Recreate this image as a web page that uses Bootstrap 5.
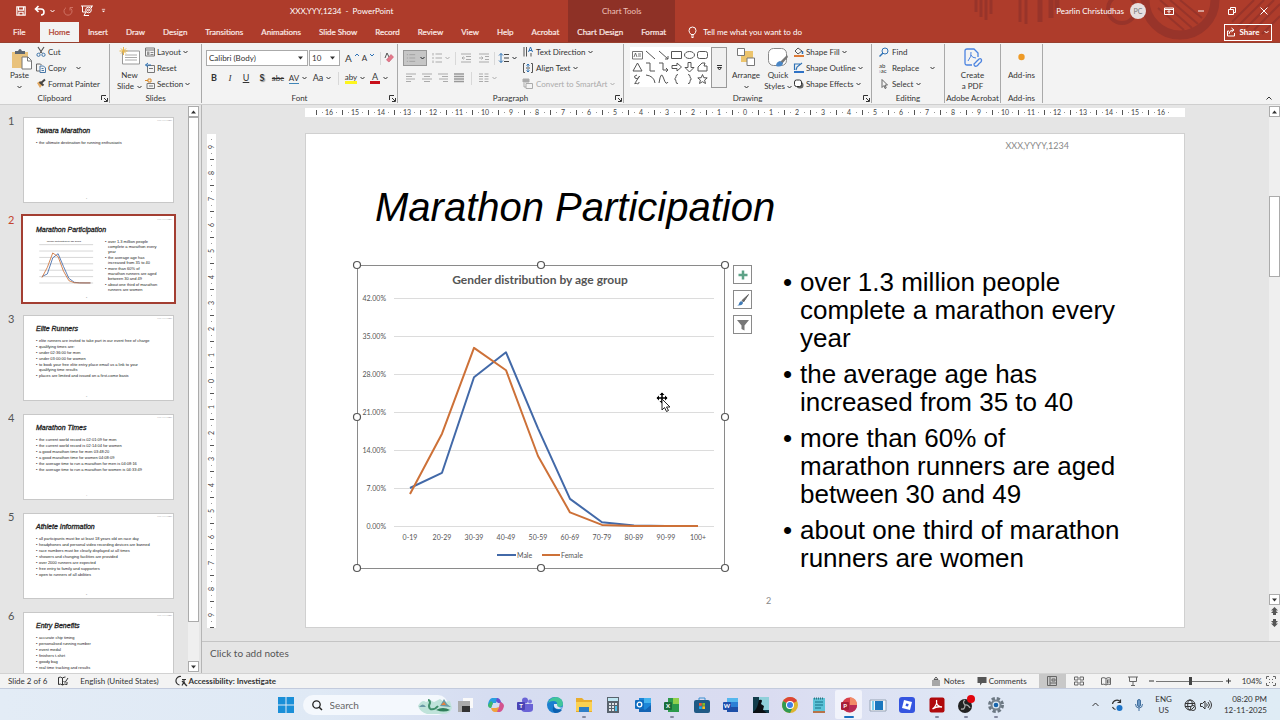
<!DOCTYPE html>
<html lang="en">
<head>
<meta charset="utf-8">
<meta name="viewport" content="width=device-width, initial-scale=1">
<title>XXX,YYY,1234 - PowerPoint</title>
<link href="https://cdn.jsdelivr.net/npm/bootstrap@5.3.0/dist/css/bootstrap.min.css" rel="stylesheet">
<style>
:root{--ui:Lato,"Open Sans",sans-serif;--brand:#ae3c2b;--ctx:#8e3126;--ink:#333}
body{font:8px/10px var(--ui);color:var(--ink);background:#e5e5e5;height:100vh;overflow:hidden}
button,input{font:inherit;color:inherit}
button{background:none;border:0;padding:0;line-height:inherit;white-space:nowrap}
svg{display:block;flex:none;fill:none;stroke:currentColor;overflow:visible}
.i5{width:5px;height:4px}.i12{width:12px;height:12px}.i10{width:10px;height:10px}.i16{width:16px;height:16px}
/* title bar and tabs */
.app-head{background:var(--brand);color:#fff;min-height:43px;border-bottom:1px solid #98402f;flex:none}
.head-main{flex:0 0 568px}
.title-row{height:22px}
.doc-name{padding-left:290px}
.quick{position:absolute;left:0;top:0;height:22px}
.tab-row{height:20px}
.rtab{height:20px;padding:0 9px;color:#fbe9e6;text-decoration:none;display:flex;align-items:center;white-space:nowrap;-webkit-text-stroke:.2px}
.rtab.first{padding:0 14px 0 13px}
.rtab.on{background:#f3f3f3;color:#b0402f}
.ctx{flex:0 0 106px;background:var(--ctx)}
.ctx-t{height:22px;color:#f0c3bc}
.deco{position:absolute;right:0;top:0;width:310px;height:42px;color:#98342a}
.avatar{width:16px;height:16px;border-radius:50%;background:#e6dfe0;color:#777;font-size:7px;margin:0 18px 0 6px}
.share{border:1px solid #fff;height:17px;width:48px}
/* ribbon */
.ribbon{background:#f3f3f3;min-height:62px;border-bottom:1px solid #cfcfcf;flex:none}
.grp{position:relative;border-right:1px solid #a9a9a9;margin:1px 0}
.grp-b{height:50px}
.grp-l{height:9px;text-align:center;line-height:9px}
.launch{position:absolute;right:1px;bottom:1px;width:7px;height:7px}
.w1{width:110px}.w2{width:92px}.w3{width:196px}.w4{width:226px}.w5{width:248px}.w6{width:73px}.w7{width:56px}.w8{width:42px}
.rrow{display:flex;align-items:center;height:16px;gap:2px}
.gap3{gap:3px}
.ib{width:10px;height:10px}
.big{display:flex;flex-direction:column;align-items:center;line-height:11px;padding-top:4px}
.two{padding-top:4px}
.two>div{height:20px;display:flex;align-items:center}
.cell{width:16px;display:flex;align-items:center;justify-content:center;gap:3px;height:14px}
.cell.wide{width:24px}
.fs9{font-size:9px}
.vsep{width:1px;height:13px;background:#d8d8d8}
.combo{height:16px;border:1px solid #aaa;background:#fff}
.combo input{border:0;outline:0;width:100%;min-width:0;padding:0 0 0 2px;height:12px;background:none}
.off{color:#ababab}
.gal{background:#fff;width:81px;height:40px;padding:2px 1px;color:#555}
.gal svg{width:13px;height:12px;padding:1px}
.more{width:16px;height:41px;border:1px solid #999;background:#f0f0f0}
/* work area */
.pane{flex:0 0 202px;border-right:1px solid #b5b5b5}
.thumbs{flex:1;overflow:hidden;padding-top:12px}
.th{display:flex;height:99px}
.th-n{width:23px;padding-left:8px;font-size:11px;line-height:8px;color:#555}
.th-s{width:151px;height:86px;background:#fff;border:1px solid #c8c8c8;padding:9px 0 0 12px;position:relative;color:#222;font-family:"Liberation Sans",sans-serif;text-decoration:none;display:block}
.th.sel .th-n{color:#c4452f}
.th.sel .th-s{outline:2px solid #a33e32;border-color:#fff}
.th-t{font-size:7px;line-height:7px;font-style:italic;font-weight:400;-webkit-text-stroke:.3px;margin:0 0 6px;white-space:nowrap}
.th-l{font-size:4px;line-height:5px;list-style:none;margin:0;padding:0;white-space:nowrap}
.th-l li{padding-left:3px;margin-bottom:1px;position:relative}
.th-l li::before{content:"•";position:absolute;left:0}
.th-h{position:absolute;right:1px;top:1px;font-size:2px;line-height:2px;color:#888}
.th-p{position:absolute;left:62px;bottom:3px;font-size:2px;line-height:2px;color:#888}
.mini{width:62px;height:51px;margin:0 10px 0 -3px}
.mini text{font:bold 14px var(--ui);fill:#555;stroke:none}
.sb{width:11px;flex:none;background:#efefef}
.sb button{height:11px;width:11px;border:1px solid #ababab;background:#fff;display:flex;align-items:center;justify-content:center;flex:none}
.sb .thumb{background:#fff;border:1px solid #ababab;width:11px}
.sb-l{margin-right:2px;padding:1px 0}
.editor{display:grid;grid-template-columns:9px 89px 1fr;grid-template-rows:9px auto;row-gap:16px;padding:3px 84px 0 5px;flex:1;overflow:hidden}
.hruler{grid-column:3;background:#fff;display:flex;justify-content:center;overflow:hidden;font-size:7px;line-height:9px;color:#444}
.hruler span{flex:0 0 26px;text-align:center;background:linear-gradient(#555,#555) 0 2px/1px 5px no-repeat,linear-gradient(#999,#999) 6px 4px/1px 1px no-repeat,linear-gradient(#999,#999) 20px 4px/1px 1px no-repeat}
.vruler{background:#fff;display:flex;flex-direction:column;font-size:7px;line-height:9px;color:#444;align-self:start;margin-top:1px}
.vruler span{height:26px;width:9px;writing-mode:vertical-rl;transform:rotate(180deg);text-align:center;background:linear-gradient(#555,#555) 2px 0/4px 1px no-repeat,linear-gradient(#999,#999) 4px 6px/1px 1px no-repeat,linear-gradient(#999,#999) 4px 20px/1px 1px no-repeat}
.slide{grid-column:3;background:#fff;border:1px solid #d0d0d0;aspect-ratio:16/9;font-family:"Liberation Sans",sans-serif;color:#000;position:relative;align-self:start;overflow:hidden}
.s-head{font:9px/24px var(--ui);color:#888;text-align:right;padding-right:115px}
.s-title{font-size:40px;line-height:48px;font-style:italic;margin:25px 0 0 69px;font-weight:400}
.s-body{margin:34px 0 0 51px}
.chart{width:368px;height:303px;position:relative}
.chart text{font:7px var(--ui);fill:#555;stroke:none}
.chart .ct{font:bold 12px var(--ui)}
.ctools{gap:6px;margin-left:8px}
.ctool{width:19px;height:19px;border:1px solid #8a8a8a;background:#fff;display:flex;align-items:center;justify-content:center}
.bul{font-size:26px;line-height:28px;margin:3px 0 0 32px;padding:0 0 0 16px;list-style:none;white-space:nowrap}
.bul li{position:relative;margin-bottom:8px}
.bul li::before{content:"•";position:absolute;left:-17px}
.s-num{position:absolute;left:0;right:0;bottom:20px;font:9px/12px var(--ui);color:#888;padding-left:460px}
.cur{position:absolute;left:299px;top:128px;width:14px;height:20px}
.notes{border:0;border-top:1px solid #c4c4c4;background:#e5e5e5;height:32px;padding:5px 8px;font-size:10px;line-height:12px;resize:none;width:100%;outline:0;display:block;font-family:var(--ui);flex:none}
.notes::placeholder{color:#555}
/* status bar */
.status{background:#f3f3f3;height:15px;border-top:1px solid #d2d2d2;flex:none}
.view{width:27px;height:14px;display:flex;align-items:center;justify-content:center;color:#666}
.view.on{background:#c8c8c8}
.zoomr{appearance:none;width:67px;height:10px;background:linear-gradient(#777,#777) 0 50%/100% 1px no-repeat;margin:0}
.zoomr::-webkit-slider-thumb{appearance:none;width:3px;height:8px;background:#444}
/* taskbar */
.task{display:grid;grid-template-columns:1fr auto 1fr;height:32px;flex:none;border-top:1px solid #c3cbdd;background:linear-gradient(90deg,#e3ecf6,#dfe9f5 25%,#d6ddf1 38%,#dadcf1 60%,#dfe7f5 75%,#dfecf5);padding-left:5px}
.start{width:23px;margin-right:5px;padding-left:3px}
.srch{width:145px;height:20px;border-radius:10px;background:#f4f8fd;color:#555;font-size:10px;padding:0 1px 0 9px}
.srch input{border:0;background:none;outline:0;width:80px;padding:0}
.srch input::placeholder{color:#666}
.apps{width:559px}
.app{flex:1;display:flex;align-items:center;justify-content:center;height:29px;position:relative}
.app::after{content:"";position:absolute;bottom:1px;width:4px;height:2px;border-radius:1px}
.app.run::after{background:#858aa0}
.app.act{background:#f1f3fb;flex:0 0 27px;border-radius:2px;margin:0 1px}
.app.act::after{background:#1a6fc0;width:10px}
.tray{padding-right:13px;gap:12px;line-height:11px}
</style>
</head>
<body class="d-flex flex-column">
<svg width="0" height="0" class="position-absolute" aria-hidden="true"><defs>
<symbol id="chev" viewBox="0 0 5 4"><path d="M.5 1l2 2 2-2"/></symbol>
<symbol id="tri" viewBox="0 0 5 4"><path d="M0 .5h5l-2.500 3z" fill="currentColor" stroke="none"/></symbol>
<symbol id="lau" viewBox="0 0 7 7"><path d="M.5 5V.5H5M3 3l3 3M6.500 3v3.500H3"/></symbol>
</defs></svg>

<header class="app-head d-flex position-relative">
  <svg class="deco" viewBox="0 0 310 42" aria-hidden="true"><g stroke-width="3"><path d="M6 0v12M11 0v17M16 0v20M21 0v14M50 0v22M56 0v24"/><path d="M70 0v22M81 0v18M87 0v10" stroke-width="5"/><circle cx="152" cy="9" r="14" stroke-width="4"/></g><path d="M175 0a35 35 0 0070 0" stroke-width="9"/><g stroke-width="2"><path d="M188 8l26 22M190 0l32 28M200 0l28 24M210 0l22 18"/><path d="M262 22l22-22M268 26l26-26M276 28l28-28M284 30l26-26M292 34l18-18"/></g></svg>
  <div class="head-main position-relative">
    <div class="title-row doc-name d-flex align-items-center">XXX,YYY,1234&nbsp; -&nbsp; PowerPoint</div>
    <div class="quick d-flex align-items-center gap-1 ps-3">
      <button aria-label="Save" class="me-1"><svg class="i10" viewBox="0 0 12 12"><path d="M1 1h10v10H1zM3 1v4h6V1M3.500 11V7.500h5V11" stroke-width="1.400"/></svg></button>
      <button aria-label="Undo"><svg class="i12" viewBox="0 0 12 12"><path d="M4.500 1L1.500 4l3 3M2 4h5q3 0 3 3t-3 3" stroke-width="1.600"/></svg></button>
      <button aria-label="Undo options"><svg class="i5"><use href="#chev"/></svg></button>
      <button aria-label="Redo" class="ms-1 opacity-50"><svg class="i10" viewBox="0 0 10 10"><path d="M7 1.700A4 4 0 1 1 3 1.700M7 4.500V1.500h3" stroke="#f0a79c"/></svg></button>
      <button aria-label="Start from beginning" class="ms-1"><svg class="i12" viewBox="0 0 12 12"><path d="M0 1h12M1.500 1v6H5M10.500 1v2M5 7l-2 3.500h5"/><circle cx="7.500" cy="5" r="2.800"/><circle cx="7.500" cy="5" r="1"/></svg></button>
      <button aria-label="Customize toolbar" class="ms-1"><svg class="i5" viewBox="0 0 5 6"><path d="M0 .5h5"/><path d="M0 2.500h5L2.500 5z" fill="currentColor" stroke="none"/></svg></button>
    </div>
    <nav class="tab-row d-flex">
      <a class="rtab first" href="#">File</a><a class="rtab on" href="#">Home</a><a class="rtab" href="#">Insert</a><a class="rtab" href="#">Draw</a><a class="rtab" href="#">Design</a><a class="rtab" href="#">Transitions</a><a class="rtab" href="#">Animations</a><a class="rtab" href="#">Slide Show</a><a class="rtab" href="#">Record</a><a class="rtab" href="#">Review</a><a class="rtab" href="#">View</a><a class="rtab" href="#">Help</a><a class="rtab" href="#">Acrobat</a>
    </nav>
  </div>
  <div class="ctx position-relative">
    <div class="ctx-t d-flex align-items-center justify-content-center">Chart Tools</div>
    <nav class="tab-row d-flex justify-content-center"><a class="rtab" href="#">Chart Design</a><a class="rtab" href="#">Format</a></nav>
  </div>
  <div class="flex-fill position-relative">
    <div class="title-row d-flex align-items-center justify-content-end pe-2 me-1">
      <span>Pearlin Christudhas</span>
      <span class="avatar d-flex align-items-center justify-content-center">PC</span>
      <button aria-label="Ribbon display options"><svg class="i10" viewBox="0 0 10 10"><path d="M.5 2h9v6.500h-9zM.5 3.500h9M5 7.500V5M3.500 6L5 4.500 6.500 6"/></svg></button>
      <button aria-label="Minimize" class="ms-4"><svg class="i10" style="width:6px" viewBox="0 0 6 10"><path d="M0 5h6"/></svg></button>
      <button aria-label="Restore" class="ms-4"><svg class="i10" style="width:8px" viewBox="0 0 8 10"><path d="M.5 3.500H5.500V8.500H.5zM2.500 3.500v-2H7.500v5h-2"/></svg></button>
      <button aria-label="Close" class="ms-4"><svg class="i10" style="width:8px" viewBox="0 0 8 10"><path d="M.5 1.500l7 7M7.500 1.500l-7 7"/></svg></button>
    </div>
    <div class="tab-row d-flex align-items-center ps-2">
      <svg class="i12 ms-1" viewBox="0 0 12 12"><path d="M4 8.500Q2 6.500 2 4.500a3.500 3.500 0 017 0Q9 6.500 7 8.500zM4 10h3M4.500 11.500h2"/></svg>
      <a href="#" class="text-white text-decoration-none ms-1">Tell me what you want to do</a>
      <button class="share ms-auto me-2 d-flex align-items-center justify-content-center gap-1 fw-bold"><svg class="i10" style="width:8px" viewBox="0 0 8 10"><path d="M2 4H.5v5h7V6M2 7q0-3.500 4-4M4.500 1L7 3 4.500 5"/></svg>Share<svg class="i5"><use href="#chev"/></svg></button>
    </div>
  </div>
</header>

<section class="ribbon d-flex position-relative" aria-label="Ribbon">
  <div class="grp w1">
    <div class="grp-b d-flex">
      <button class="big" style="width:39px"><svg style="width:20px;height:22px;margin-left:4px" viewBox="0 0 20 22"><path d="M0 4h16v16H0z" fill="#e9c27c" stroke="none"/><path d="M3 6V3h3q2-4 4 0h3v3z" fill="#5d6670" stroke="none"/><path d="M10 9h6l3.500 3.500V21H10z" fill="#fff" stroke="#777"/><path d="M15.500 9v4h4" stroke="#777"/></svg><span>Paste</span><svg class="i5 mt-1"><use href="#chev"/></svg></button>
      <div style="margin-left:-3px">
        <button class="rrow"><svg class="ib" viewBox="0 0 10 10"><path d="M2 0l4 6M8 0L4 6" stroke="#555" stroke-width="1.200"/><circle cx="2.500" cy="7.800" r="1.600" stroke="#3f74a8"/><circle cx="7.500" cy="7.800" r="1.600" stroke="#3f74a8"/></svg>Cut</button>
        <button class="rrow"><svg class="ib" viewBox="0 0 10 10"><path d="M.5 1h4l1 1M.5 1v7H4" stroke="#666"/><path d="M4 3h3.500L9.500 5v4.500H4zM5.500 5.500h2M5.500 7.500h2.500" stroke="#4a79a8"/></svg><span>Copy</span><svg class="i5 ms-2"><use href="#chev"/></svg></button>
        <button class="rrow"><svg class="ib" viewBox="0 0 10 10"><path d="M1 4l3-2 3 3-3 4z" fill="#e3a860" stroke="none"/><path d="M5 4l4-3.500M3.500 3l4 3.500" stroke="#444" stroke-width="2"/></svg>Format Painter</button>
      </div>
    </div>
    <div class="grp-l">Clipboard</div><svg class="launch"><use href="#lau"/></svg>
  </div>
  <div class="grp w2">
    <div class="grp-b d-flex">
      <button class="big ps-1" style="width:35px"><svg style="width:20px;height:22px" viewBox="0 0 20 22"><path d="M2.500 3h17v13h-17z" fill="#fff" stroke="#999"/><path d="M5 7h12M5 9.500h12M5 12h12" stroke="#aaa"/><path d="M3.500-1v8M-.5 3h8M1 .5l5 5M6 .5l-5 5" stroke="#e8b649"/></svg><span>New</span><span class="d-flex align-items-center gap3">Slide<svg class="i5"><use href="#chev"/></svg></span></button>
      <div>
        <button class="rrow"><svg class="ib" viewBox="0 0 10 10"><path d="M.5 1h9v8h-9zM.5 3h9" stroke="#777"/><path d="M2 4.500h2.500V8H2z" fill="#999" stroke="none"/><path d="M5.500 5.500h3M5.500 7.500h3" stroke="#888"/></svg>Layout<svg class="i5"><use href="#chev"/></svg></button>
        <button class="rrow"><svg class="ib" viewBox="0 0 10 10"><path d="M2.500 2.500h7v7h-7zM4 5.500h4" stroke="#777"/><path d="M3 0L.5 2 3 4M.5 2H6" stroke="#2f72b5"/></svg>Reset</button>
        <button class="rrow"><svg class="ib" viewBox="0 0 10 10"><path d="M0 1.500h3M3 0h3v3H3z" stroke="#d98a2b"/><path d="M2 4.500h7.500v5H2zM4 7h4" stroke="#777"/></svg>Section<svg class="i5"><use href="#chev"/></svg></button>
      </div>
    </div>
    <div class="grp-l">Slides</div>
  </div>
  <div class="grp w3">
    <div class="grp-b two">
      <div class="ps-1 rgap">
        <div class="combo d-flex align-items-center pe-1" style="width:102px"><input aria-label="Font" value="Calibri (Body)"><svg class="i5"><use href="#tri"/></svg></div>
        <div class="combo d-flex align-items-center pe-1" style="width:31px;margin-left:1px"><input aria-label="Font size" value="10"><svg class="i5"><use href="#tri"/></svg></div>
        <button class="cell ms-1" aria-label="Increase font size"><span style="font-size:10px">A</span><svg style="width:4px;height:8px" viewBox="0 0 4 8"><path d="M0 2l2-2 2 2" stroke="#2f72b5"/></svg></button>
        <button class="cell" aria-label="Decrease font size"><span>A</span><svg style="width:4px;height:8px" viewBox="0 0 4 8"><path d="M0 0l2 2 2-2" stroke="#2f72b5"/></svg></button>
        <span class="vsep ms-1"></span>
        <button class="cell" aria-label="Clear formatting"><svg class="i10" viewBox="0 0 10 10"><path d="M1 5l2-5 2 4" stroke="#555"/><path d="M2.500 7L7 1.500 9.500 4 5 9z" fill="#e4788a" stroke="#c8566b" stroke-width=".6"/></svg></button>
      </div>
      <div class="ps-1">
        <button class="cell fw-bold fs9">B</button><button class="cell" style="font:italic 9px 'Liberation Serif',serif">I</button><button class="cell text-decoration-underline fs9">U</button><button class="cell fw-bold fs9" style="text-shadow:1px 1px 1px #888">S</button><button class="cell text-decoration-line-through">abc</button>
        <button class="cell wide" aria-label="Character spacing"><span style="border-bottom:1px solid #3f86b8">AV</span><svg class="i5"><use href="#chev"/></svg></button>
        <button class="cell wide"><span class="fs9">Aa</span><svg class="i5"><use href="#chev"/></svg></button>
        <span class="vsep ms-1"></span>
        <button class="cell wide ms-1" aria-label="Highlight color"><span style="border-bottom:3px solid #fdf51e;line-height:8px">aby</span><svg class="i5"><use href="#chev"/></svg></button>
        <button class="cell wide" aria-label="Font color"><span class="fs9" style="border-bottom:3px solid #c80f1a;line-height:9px;padding:0 2px">A</span><svg class="i5"><use href="#chev"/></svg></button>
      </div>
    </div>
    <div class="grp-l">Font</div><svg class="launch"><use href="#lau"/></svg>
  </div>
  <div class="grp w4">
    <div class="grp-b d-flex">
      <div class="two off" style="width:122px;padding-left:5px">
        <div style="gap:2px">
          <button class="d-flex align-items-center justify-content-center gap-1" aria-label="Bullets" style="width:24px;height:16px;background:#c6c6c6;border:1px solid #979797"><svg class="i10" viewBox="0 0 12 12"><path d="M1 2h1.500M4 2h7M1 6h1.500M4 6h7M1 10h1.500M4 10h7" stroke="#9c9c9c"/></svg><svg class="i5 text-dark"><use href="#chev"/></svg></button>
          <button class="cell wide" aria-label="Numbering"><svg class="i10" viewBox="0 0 10 10"><path d="M1 0v2.500M1 4v2M1 7.500V10M3.500 1H10M3.500 5H10M3.500 9H10"/></svg><svg class="i5"><use href="#chev"/></svg></button>
          <span class="vsep"></span>
          <button class="cell" aria-label="Decrease indent"><svg class="i10" viewBox="0 0 10 10"><path d="M0 1h10M5 3.500h5M5 6.500h5M0 9h10M4 5H1M2.500 3.500L1 5l1.500 1.500"/></svg></button>
          <button class="cell" aria-label="Increase indent"><svg class="i10" viewBox="0 0 10 10"><path d="M0 1h10M6 3.500h4M6 6.500h4M0 9h10M0 5h4M2.500 3.500L4 5 2.500 6.500"/></svg></button>
          <span class="vsep"></span>
          <button class="cell" aria-label="Line spacing" style="width:22px"><svg class="i10" viewBox="0 0 10 10"><path d="M2 .5v9M0 2.500L2 .5l2 2M0 7.500l2 2 2-2" stroke="#2f72b5"/><path d="M5 1.500h5M5 5h5M5 8.500h5" stroke="#444"/></svg><svg class="i5 text-dark"><use href="#chev"/></svg></button>
        </div>
        <div>
          <button class="cell" aria-label="Align left"><svg class="i10" viewBox="0 0 10 10"><path d="M0 1h10M0 3.500h6M0 6h9M0 8.500h5"/></svg></button>
          <button class="cell" aria-label="Center"><svg class="i10" viewBox="0 0 10 10"><path d="M0 1h10M2 3.500h6M0 6h10M2 8.500h6"/></svg></button>
          <button class="cell" aria-label="Align right"><svg class="i10" viewBox="0 0 10 10"><path d="M0 1h10M4 3.500h6M1 6h9M5 8.500h5"/></svg></button>
          <button class="cell" aria-label="Justify"><svg class="i10" viewBox="0 0 10 10"><path d="M0 1h10M0 3.500h10M0 6h10M0 8.500h10" stroke-width="1.500" stroke="#999"/></svg></button>
          <span class="vsep ms-1"></span>
          <button class="cell wide ms-1" aria-label="Columns"><svg class="i10" viewBox="0 0 10 10"><path d="M0 1h4M0 3.500h4M0 6h4M0 8.500h4M5.500 1h4M5.500 3.500h4M5.500 6h4M5.500 8.500h4"/></svg><svg class="i5"><use href="#chev"/></svg></button>
        </div>
      </div>
      <div style="padding-left:3px">
        <button class="rrow gap3"><svg class="ib" viewBox="0 0 10 10"><path d="M1 0v9.500M3.500 0v9.500M8 6v3.500" stroke="#555"/><path d="M5.500 5L7.500 0l2 5M6 3.500h3" stroke="#2f72b5"/></svg>Text Direction<svg class="i5"><use href="#chev"/></svg></button>
        <button class="rrow gap3"><svg class="ib" viewBox="0 0 10 10"><path d="M2 .5H.5v9H2M8 .5h1.500v9H8M3 5h4" stroke="#555"/><path d="M5 1v3M5 6v3M3.500 2.500L5 1l1.500 1.500M3.500 7.500L5 9l1.500-1.500" stroke="#2f72b5"/></svg>Align Text<svg class="i5"><use href="#chev"/></svg></button>
        <button class="rrow gap3 off"><svg class="ib" viewBox="0 0 10 10"><path d="M0 0h6v3H0z" fill="currentColor"/><path d="M3 4.500h6.500v5H3z"/><path d="M1 4v4h2"/></svg>Convert to SmartArt<svg class="i5"><use href="#chev"/></svg></button>
      </div>
    </div>
    <div class="grp-l">Paragraph</div><svg class="launch"><use href="#lau"/></svg>
  </div>
  <div class="grp w5">
    <div class="grp-b d-flex" style="padding-left:6px">
      <div class="d-flex" style="padding-top:3px">
        <div class="gal d-flex flex-wrap">
          <svg viewBox="0 0 11 10"><path d="M.5 1.500h10v7.500H.5zM2 7l1.500-4L5 7M6 4h3M6 6h3" stroke-width=".8"/></svg><svg viewBox="0 0 11 10"><path d="M1 1l9 8"/></svg><svg viewBox="0 0 11 10"><path d="M1 1l9 8M10 6v3H7"/></svg><svg viewBox="0 0 11 10"><path d="M.5 1.500h10v7H.5z"/></svg><svg viewBox="0 0 11 10"><ellipse cx="5.500" cy="5" rx="5" ry="3.500"/></svg><svg viewBox="0 0 11 10"><rect x=".5" y="1.500" width="10" height="7" rx="2"/></svg>
          <svg viewBox="0 0 11 10"><path d="M5.500 1l4.500 8H1z"/></svg><svg viewBox="0 0 11 10"><path d="M1 1h4v8h5"/></svg><svg viewBox="0 0 11 10"><path d="M1 1h4v7h5M8 6l2 2-2 2"/></svg><svg viewBox="0 0 11 10"><path d="M1 3.500h5V1l4.500 4L6 9V6.500H1z"/></svg><svg viewBox="0 0 11 10"><path d="M4 .5h3v5h3L5.500 10 1 5.500h3z"/></svg><svg viewBox="0 0 11 10"><path d="M1 9V5l4-4h3L7 4h3v5z"/></svg>
          <svg viewBox="0 0 11 10"><path d="M5 1Q1 2 3 4t4-1-2 3-1 3q3 2 3-1"/></svg><svg viewBox="0 0 11 10"><path d="M1 1q8 1 9 8"/></svg><svg viewBox="0 0 11 10"><path d="M1 9Q3-4 5.500 4T10 8"/></svg><svg viewBox="0 0 11 10"><path d="M7 .5q-2 0-2 2T3.500 5Q5 5 5 7.500t2 2"/></svg><svg viewBox="0 0 11 10"><path d="M4 .5q2 0 2 2T7.500 5Q6 5 6 7.500t-2 2"/></svg><svg viewBox="0 0 11 10"><path d="M5.500.5l1.300 3.200 3.400.2-2.600 2.200.9 3.400-3-1.800-3 1.800.9-3.400L.8 3.900l3.400-.2z"/></svg>
        </div>
        <button class="more d-flex align-items-center justify-content-center" aria-label="More shapes"><svg style="width:5px;height:6px" viewBox="0 0 5 6"><path d="M0 .5h5M.5 2.500h4L2.500 5z"/></svg></button>
      </div>
      <button class="big" style="width:34px;margin-left:2px"><svg style="width:18px;height:18px;margin-bottom:4px" viewBox="0 0 18 18"><path d="M4 3h12v11H4z" fill="#ecc46c" stroke="none"/><path d="M.5.500h7v7h-7zM10 10h7.500v7.500H10z" fill="#fff" stroke="#777"/></svg><span>Arrange</span><svg class="i5 mt-1"><use href="#chev"/></svg></button>
      <button class="big" style="width:30px"><svg style="width:20px;height:20px;margin-bottom:2px" viewBox="0 0 20 20"><rect x=".5" y=".5" width="18" height="17" rx="5" fill="#fff" stroke="#888"/><path d="M19 7l-7 7-1 3 3-1 6-7z" fill="#777" stroke="none"/><path d="M12 13q-4 1-4 5 6 2 7-3z" fill="#4a86c5" stroke="none"/></svg><span>Quick</span><span class="d-flex align-items-center" style="gap:2px">Styles<svg class="i5"><use href="#chev"/></svg></span></button>
      <div style="margin-left:1px">
        <button class="rrow"><svg class="ib" viewBox="0 0 10 10"><path d="M4 1L1 4l3 3 4-3z" stroke="#555"/><path d="M0 8h10v2H0z" fill="#dd7a36" stroke="none"/><path d="M8.500 4v3" stroke="#2f72b5" stroke-width="1.500"/></svg>Shape Fill<svg class="i5"><use href="#chev"/></svg></button>
        <button class="rrow"><svg class="ib" viewBox="0 0 10 10"><path d="M0 8h10v2H0z" fill="#2f72c5" stroke="none"/><path d="M2 7l1-3L8 0M6 1H.5v6" stroke="#2f72b5" stroke-width="1.200"/></svg>Shape Outline<svg class="i5"><use href="#chev"/></svg></button>
        <button class="rrow"><svg class="ib" viewBox="0 0 10 10"><rect x="2.500" y="3" width="7" height="6.500" rx="3" fill="#666" stroke="none"/><rect x=".5" y="1" width="7" height="6.500" rx="2" fill="#fff"/></svg>Shape Effects<svg class="i5"><use href="#chev"/></svg></button>
      </div>
    </div>
    <div class="grp-l">Drawing</div><svg class="launch"><use href="#lau"/></svg>
  </div>
  <div class="grp w6">
    <div class="grp-b" style="padding-left:7px">
      <button class="rrow gap3"><svg class="ib" viewBox="0 0 10 10"><circle cx="6" cy="4" r="3" stroke="#2f72b5"/><path d="M4 6L.5 9.500" stroke="#2f72b5" stroke-width="1.500"/></svg>Find</button>
      <button class="rrow gap3"><span class="ib" style="font-size:6px;line-height:5px;text-align:left">ab<br><span style="color:#2f72b5">›</span>ac</span><span class="me-2">Replace</span><svg class="i5"><use href="#chev"/></svg></button>
      <button class="rrow gap3"><svg class="ib" viewBox="0 0 10 10"><path d="M3 .5v8l2-2 1 3 1.200-.5-1-3H8.500z" stroke="#666"/></svg>Select<svg class="i5"><use href="#chev"/></svg></button>
    </div>
    <div class="grp-l">Editing</div>
  </div>
  <div class="grp w7">
    <div class="grp-b">
      <button class="big w-100"><svg style="width:18px;height:19px;margin-bottom:3px" viewBox="0 0 18 19"><path d="M8 17H3q-2 0-2-2V3q0-2 2-2h7l4 4v4" stroke="#4b83e0" stroke-width="1.300"/><path d="M4 13q4-5 3-9M7 7q1 3 5 3" stroke="#4b83e0"/><path d="M11 15l4-4q2-1 2.500 1t-3 4M13 13l-3 3q0 3 3 2l2-2" stroke="#4b83e0" stroke-width="1.300"/></svg><span>Create</span><span>a PDF</span></button>
    </div>
    <div class="grp-l text-nowrap">Adobe Acrobat</div>
  </div>
  <div class="grp w8">
    <div class="grp-b">
      <button class="big w-100"><svg style="width:18px;height:19px;margin-bottom:3px" viewBox="0 0 18 19"><circle cx="8.500" cy="9" r="3.200" fill="#ee9a26" stroke="none"/></svg><span>Add-ins</span></button>
    </div>
    <div class="grp-l">Add-ins</div>
  </div>
  <button class="ms-auto align-self-end me-1 mb-1" aria-label="Collapse ribbon"><svg class="i5 me-1" style="width:6px" viewBox="0 0 6 4"><path d="M.5 3.500l2.500-2.500 2.500 2.500"/></svg></button>
</section>

<main class="d-flex flex-fill overflow-hidden">
  <aside class="pane d-flex" aria-label="Slides">
    <div class="thumbs" id="thumbs"></div>
    <div class="sb sb-l d-flex flex-column">
      <button aria-label="Scroll up"><svg class="i5" viewBox="0 0 5 4"><path d="M0 3.500h5L2.500.5z" fill="currentColor" stroke="none"/></svg></button>
      <div class="thumb" style="flex:505"></div><div style="flex:39"></div>
      <button aria-label="Scroll down"><svg class="i5"><use href="#tri"/></svg></button>
    </div>
  </aside>
  <div class="flex-fill d-flex flex-column overflow-hidden">
    <div class="d-flex flex-fill overflow-hidden">
      <div class="editor">
        <div class="hruler" id="hruler"></div>
        <div class="vruler" id="vruler"></div>
        <article class="slide">
          <div class="s-head">XXX,YYYY,1234</div>
          <h1 class="s-title">Marathon Participation</h1>
          <div class="s-body d-flex">
            <div class="chart">
              <svg id="chart" width="368" height="303" viewBox="0 0 368 303" role="img" aria-label="Gender distribution by age group"></svg>
              <svg class="cur" viewBox="0 0 14 20"><path d="M6 0v10M1 5h10" stroke="#000" stroke-width="1.500"/><path d="M6-.5l2.500 2.500h-5zM6 10.500L3.500 8h5zM.5 5L3 2.500v5zM11.500 5L9 2.500v5z" fill="#000" stroke="none"/><path d="M6 6v11l2.500-2.500 2 4 2-1-2-3.500H14z" fill="#fff" stroke="#222"/></svg>
            </div>
            <div class="ctools d-flex flex-column">
              <button class="ctool" aria-label="Chart elements"><svg class="i10" viewBox="0 0 10 10"><path d="M5 .5v9M.5 5h9" stroke="#5ea287" stroke-width="2.500"/></svg></button>
              <button class="ctool" aria-label="Chart styles"><svg class="i12" viewBox="0 0 12 12"><path d="M11.500.5L5 6.500l1.500 1.500z" fill="#666" stroke="#666"/><path d="M0 11.500Q2 11 2.500 8.500 4 6 6 8.500 6 12 0 11.500z" fill="#3f7ab5" stroke="none"/></svg></button>
              <button class="ctool" aria-label="Chart filters"><svg class="i12" viewBox="0 0 12 12"><path d="M0 1h12L7.500 6.500v5L4.500 10V6.500z" fill="#777" stroke="none"/></svg></button>
            </div>
            <ul class="bul">
              <li>over 1.3 million people<br>complete a marathon every<br>year</li>
              <li>the average age has<br>increased from 35 to 40</li>
              <li>more than 60% of<br>marathon runners are aged<br>between 30 and 49</li>
              <li>about one third of marathon<br>runners are women</li>
            </ul>
          </div>
          <div class="s-num">2</div>
        </article>
      </div>
      <div class="sb d-flex flex-column" style="padding-top:1px">
        <button aria-label="Scroll up"><svg class="i5" viewBox="0 0 5 4"><path d="M0 3.500h5L2.500.5z" fill="currentColor" stroke="none"/></svg></button>
        <div style="flex:79"></div><div class="thumb" style="flex:80"></div><div style="flex:318"></div>
        <button aria-label="Scroll down"><svg class="i5"><use href="#tri"/></svg></button>
        <svg class="mx-auto" style="width:7px;height:36px" viewBox="0 0 7 36"><path d="M3.500 2L7 5.500H5V6l2 2H5v2H2V8H0l2-2v-.5H0zM3.500 22L7 18.500H5V18l2-2H5v-2H2v2H0l2 2v.5H0z" fill="#555" stroke="none"/></svg>
      </div>
    </div>
    <textarea class="notes" aria-label="Notes" placeholder="Click to add notes"></textarea>
  </div>
</main>

<footer class="status d-flex align-items-center ps-2">
  <span>Slide 2 of 6</span>
  <svg class="i10" style="margin:0 12px 0 11px" viewBox="0 0 10 10"><path d="M4.500 2Q2.500.5.5 1.500v7q2-1 4 .5V2Q6 1 7.500 1M4.500 9q2-1.500 4.500-.5V6M5.500 5l1.500 1.500L10 2"/></svg>
  <span>English (United States)</span>
  <svg class="i10" style="margin:0 2px 0 18px" viewBox="0 0 10 10"><path d="M4 .5A4.300 4.300 0 002.500 9M5 3.500h4M7 3v3M7 6l-2 3.500M7 6l2 3.500M5 5l5 5" stroke-width="1.200"/></svg>
  <span class="fw-bold">Accessibility: Investigate</span>
  <button class="ms-auto d-flex align-items-center gap-1"><svg class="i10" style="width:8px" viewBox="0 0 8 10"><path d="M0 5h8M0 7h8M0 9h8M4 1l2 2.500H2z" stroke-width=".8"/></svg>Notes</button>
  <button class="d-flex align-items-center" style="margin:0 12px;gap:2px"><svg class="i10" viewBox="0 0 10 10"><path d="M.5 1h9v6H5L3 9.500V7H.5z" fill="#555" stroke="none"/></svg>Comments</button>
  <button class="view on" aria-label="Normal"><svg class="i10" viewBox="0 0 10 10"><path d="M.5.500h9v9h-9zM3 .5v9M5 3h3v2H5zM3 7h6.500"/></svg></button>
  <button class="view" aria-label="Slide sorter"><svg class="i10" viewBox="0 0 10 10"><path d="M.5 1h3.500v3H.5zM6 1h3.500v3H6zM.5 6h3.500v3H.5zM6 6h3.500v3H6z"/></svg></button>
  <button class="view" aria-label="Reading view"><svg class="i10" viewBox="0 0 10 10"><path d="M5 2.500Q3 1 .5 2v6.500q2.500-1 4.500.5 2-1.500 4.500-.5V2Q7 1 5 2.500V9M6.500 3.500v4M8 3v4"/></svg></button>
  <button class="view" aria-label="Slide show"><svg class="i10" viewBox="0 0 10 10"><path d="M0 1h10M1.500 1v4.500h7V1M5 5.500V9M3 9.500h4"/></svg></button>
  <button aria-label="Zoom out" style="padding:0 2px"><svg class="i5" viewBox="0 0 5 4"><path d="M0 2h5"/></svg></button>
  <input class="zoomr" type="range" min="0" max="100" value="52" aria-label="Zoom">
  <button aria-label="Zoom in" style="padding:0 3px"><svg class="i5" viewBox="0 0 5 4"><path d="M0 2h5M2.500-.5v5"/></svg></button>
  <span class="ms-2 me-1">104%</span>
  <button aria-label="Fit to window" class="me-1"><svg class="i10" viewBox="0 0 10 10"><path d="M.5 3V.5H3M7 .5h2.500V3M9.500 7v2.500H7M3 9.500H.5V7M3 3l1 1M7 3L6 4M3 7l1-1M7 7L6 6" stroke="#666"/></svg></button>
</footer>

<footer class="task align-items-center">
  <div></div>
  <div class="d-flex align-items-center">
    <button aria-label="Start" class="start"><svg class="i16" viewBox="0 0 16 16"><path d="M0 0h7.500v7.500H0zM8.500 0H16v7.500H8.500zM0 8.500h7.500V16H0zM8.500 8.500H16V16H8.500z" fill="#1a8fd8" stroke="none"/></svg></button>
    <div class="srch d-flex align-items-center gap-2"><svg class="i10" viewBox="0 0 10 10"><circle cx="4.500" cy="4.500" r="3.700" stroke="#222" stroke-width="1.300"/><path d="M7.200 7.200L10 10" stroke="#222" stroke-width="1.500"/></svg><input aria-label="Search" placeholder="Search">
      <svg class="ms-auto" style="width:34px;height:18px" viewBox="0 0 34 18"><path d="M0 10Q4 3 8 6l4-2 4 2 6-3 4 3 6-1 2 7q-2 6-9 6H9Q2 16 0 10z" fill="#bfe3da" stroke="none"/><path d="M1 11q4-5 7 0zM22 10l4-7 3 5 4 3z" fill="#6b9aa6" stroke="none"/><path d="M12 13q-2-3 0-6 0-3-2-3M12 13q5 1 8-3" stroke="#3f8f6a" stroke-width="2"/><path d="M23 9l3-3 2 3z" fill="#e7803c" stroke="none"/><path d="M18 14q7-4 14 0-6 3-14 0z" fill="#2f7f5a" stroke="none"/></svg></div>
    <div class="apps d-flex ms-1" id="apps"></div>
  </div>
  <div class="tray d-flex align-items-center justify-content-end">
    <svg style="width:7px;height:5px" viewBox="0 0 7 5"><path d="M.5 4l3-3 3 3"/></svg>
    <svg class="i12" viewBox="0 0 12 12"><path d="M1.500 5a4.500 4.500 0 018-2M9.500.5V3.500h-3M1.500 8a4.500 4.500 0 003 2.500" stroke-width="1.200"/><circle cx="8.500" cy="9" r="3" fill="#1d74c9" stroke="none"/></svg>
    <svg class="i12" style="width:8px" viewBox="0 0 8 12"><rect x="2.500" y=".5" width="3" height="7" rx="1.500" fill="#6b97c4" stroke="#416f9e"/><path d="M.5 5q0 4 3.500 4t3.500-4M4 9v3" stroke="#416f9e"/></svg>
    <span class="text-center">ENG<br>US</span>
    <span class="d-flex gap-1"><svg class="i12" viewBox="0 0 12 12"><circle cx="6" cy="6" r="5"/><ellipse cx="6" cy="6" rx="2.300" ry="5"/><path d="M1 4.500h10M1 7.500h10"/><circle cx="9" cy="9" r="2.500" fill="#dfecf5"/><path d="M7.500 10.500l3-3"/></svg>
    <svg class="i12" viewBox="0 0 12 12"><path d="M.5 4.500h2L5 2v8L2.500 7.500h-2zM6.500 4.500q1.500 1.500 0 3M8 3q3 3 0 6M9.500 1.500q4 4.500 0 9"/></svg></span>
    <span class="text-end">08:20 PM<br>12-11-2025</span>
  </div>
</footer>

<script>
const $=id=>document.getElementById(id);
const slides=[
 ["Tawara Marathon",["the ultimate destination for running enthusiasts"]],
 ["Marathon Participation",["over 1.3 million people<br>complete a marathon every<br>year","the average age has<br>increased from 35 to 40","more than 60% of<br>marathon runners are aged<br>between 30 and 49","about one third of marathon<br>runners are women"]],
 ["Elite Runners",["elite runners are invited to take part in our event free of charge","qualifying times are:","under 02:36:00 for men","under 03:00:00 for women","to book your free elite entry place email us a link to your<br>qualifying time results","places are limited and issued on a first-come basis"]],
 ["Marathon Times",["the current world record is 02:01:09 for men","the current world record is 02:14:04 for women","a good marathon time for men 03:48:20","a good marathon time for women 04:08:09","the average time to run a marathon for men is 04:08:16","the average time to run a marathon for women is 04:33:49"]],
 ["Athlete Information",["all participants must be at least 18 years old on race day","headphones and personal video recording devices are banned","race numbers must be clearly displayed at all times","showers and changing facilities are provided","over 2000 runners are expected","free entry to family and supporters","open to runners of all abilities"]],
 ["Entry Benefits",["accurate chip timing","personalised running number","event medal","finishers t-shirt","goody bag","real time tracking and results"]]];
/* chart geometry: plot area in the chart's own coordinates */
const male=[7,9.8,27.4,32,18,5,.7,.1,0,0],female=[5.9,17,32.8,28.7,12.9,2.5,.2,0,0,0];
const X=i=>53+32*i,Y=v=>Math.round((261-v*38/7)*10)/10;
const line=a=>a.map((v,i)=>X(i)+','+Y(v)).join(' ');
const cats=["0-19","20-29","30-39","40-49","50-59","60-69","70-79","80-89","90-99","100+"];
const plot=(c,w)=>{let s='';for(let v=0;v<=42;v+=7)s+=`<path d="M37 ${Y(v)+.5}H357" stroke="${c}" stroke-width="${w}"/>`;return s};
const lines=w=>`<polyline points="${line(male)}" stroke="#4269a8" stroke-width="${w}" stroke-linejoin="round"/><polyline points="${line(female)}" stroke="#cd7138" stroke-width="${w}" stroke-linejoin="round"/>`;
let g='<rect x=".5" y=".5" width="367" height="303" stroke="#8a8a8a"/>'+plot('#dcdcdc',1);
for(let v=0;v<=42;v+=7)g+=`<text x="29" y="${Y(v)+3}" text-anchor="end">${v}.00%</text>`;
cats.forEach((c,i)=>g+=`<text x="${X(i)}" y="275" text-anchor="middle">${c}</text>`);
g+=lines(2)+'<text class="ct" x="183" y="19" text-anchor="middle">Gender distribution by age group</text>';
g+='<path d="M140 290h19" stroke="#4269a8" stroke-width="2"/><text x="160" y="293">Male</text><path d="M185 290h18" stroke="#cd7138" stroke-width="2"/><text x="204" y="293">Female</text>';
[[0,0],[184,0],[368,0],[0,152],[368,152],[0,303],[184,303],[368,303]].forEach(p=>g+=`<circle cx="${p[0]}" cy="${p[1]}" r="3.5" fill="#fff" stroke="#555" stroke-width="1.200"/>`);
$('chart').innerHTML=g;
$('thumbs').innerHTML=slides.map((s,i)=>{
 const list=`<ul class="th-l">${s[1].map(t=>`<li>${t}</li>`).join('')}</ul>`;
 const body=i==1?`<div class="d-flex"><svg class="mini" viewBox="0 0 368 303">${plot('#c4c4c4',4)}${lines(5)}<text x="183" y="19" text-anchor="middle">Gender distribution by age group</text></svg>${list}</div>`:list;
 const num=i<5?`<span class="th-p">${i+1}</span>`:'';
 return `<div class="th${i==1?' sel':''}"><span class="th-n">${i+1}</span><a class="th-s" href="#"><span class="th-h">XXX,YYYY,1234</span><h2 class="th-t">${s[0]}</h2>${body}${num}</a></div>`}).join('');
for(let n=-16;n<=16;n++)$('hruler').innerHTML+=`<span>${Math.abs(n)}</span>`;
for(let n=-9;n<=9;n++)$('vruler').innerHTML+=`<span>${Math.abs(n)}</span>`;
const letter=(c,t)=>`<rect x="0" y="5" width="8" height="8" rx="1" fill="${c}"/><text x="4" y="11" text-anchor="middle" style="font:bold 6px Lato" fill="#fff">${t}</text>`;
const apps=[
 ["Task view",'<path d="M5 1h10v10H5z" fill="#fafafa"/><path d="M0 4h12v11H0z" fill="#333"/><path d="M0 4h12v5H4v6H0z" fill="#aaa"/>'],
 ["Copilot",'<path d="M4 1h6l-2 5H5L3 11q-3-1-3-4 1-5 4-6z" fill="#2a9fe0"/><path d="M9 1q3 0 4 4l1 1-4 0-2-2z" fill="#6a4fd0"/><path d="M12 5q4 1 4 4-1 5-4 6H8l3-5z" fill="#d3538f"/><path d="M3 11h5l3-1-2 5H7q-3 0-4-4z" fill="#f0a23c"/><path d="M0 8l3-4 2 2-2 5q-3 0-3-3z" fill="#42b86b"/>'],
 ["Teams",'<circle cx="8" cy="3.500" r="3" fill="#6a63d6"/><circle cx="13" cy="4.500" r="2" fill="#7a74dd"/><path d="M4 7h12v5q0 3-4 3H8q-4 0-4-4z" fill="#6a63d6"/>'+letter('#4a43b5','T')],
 ["Edge",'<circle cx="8" cy="8" r="8" fill="#1b7fd0"/><path d="M1 6q2-6 8-6 7 1 7 7 0 3-4 3-3 0-2-2 1-4-4-4Q3 4 1 6z" fill="#41c59b"/><path d="M7 8q0 6 8 5-2 3-7 3-4-2-1-8z" fill="#0c5fae"/><path d="M7 7q-1 5 5 5 3 0 4-2-2 1-4 0-2 0-2-3z" fill="#dfe6f6"/>'],
 ["File Explorer",'<path d="M0 1h6l2 2h8v12H0z" fill="#e9ad2d"/><path d="M0 5h16v9H0z" fill="#fbd152"/><path d="M3 10h10v5H3z" fill="#2d7ec7"/>',1],
 ["Calculator",'<path d="M2 0h12v16H2z" fill="#59636d"/><path d="M3 1h10v3H3z" fill="#bfe6f2"/><path d="M4 6h2v2H4zM7 6h2v2H7zM4 9h2v2H4zM7 9h2v2H7zM4 12h2v2H4zM7 12h2v2H7zM10 6h2v2h-2z" fill="#dfe4e8"/><path d="M10 9h2v5h-2z" fill="#4cc0e8"/>'],
 ["Outlook",'<path d="M4 1h12v14H4z" fill="#1c86d8"/><path d="M9 1h7v5H9z" fill="#45b3ee"/><path d="M4 9l6 4 6-5v7H4z" fill="#1464b4"/>'+'<rect y="3" width="9" height="9" rx="1" fill="#0f6cc0"/><circle cx="4.500" cy="7.500" r="2.300" fill="none" stroke="#fff" stroke-width="1.300"/>'],
 ["Excel",'<path d="M4 1h11v14H4z" fill="#2c9a4b"/><path d="M9 1h6v6H9z" fill="#8fd04c"/>'+letter('#1a6e3a','X'),1],
 ["Store",'<rect y="3" width="16" height="13" rx="2" fill="#205a86"/><path d="M5 3V1h6v2" fill="none" stroke="#3b8fd0"/><path d="M5 6h2.800v2.800H5z" fill="#ee5a35"/><path d="M8.300 6H11v2.800H8.300z" fill="#81bb28"/><path d="M5 9.300h2.800V12H5z" fill="#1ea5e8"/><path d="M8.300 9.300H11V12H8.300z" fill="#fbbd1b"/>'],
 ["Word",'<path d="M4 1h11v5H4z" fill="#55b7ee"/><path d="M4 5h11v5H4z" fill="#2b7fd6"/><path d="M4 10h11v5H4z" fill="#1d4fa8"/>'+letter('#1f4fae','W')],
 ["Kindle",'<path d="M0 0h16v16H0z" fill="#123c4b"/><path d="M6 0h10v13H6z" fill="#8fd0da"/><path d="M0 15q4-3 5-8l1-4q3-1 3 1l-1 3 3 2-1 4 4 3H0z" fill="#0a0f12"/>'],
 ["Chrome",'<circle cx="8" cy="8" r="8" fill="#dfb52e"/><path d="M8 8L1 4q3-4 7-4 5 0 7 4z" fill="#dc4437"/><path d="M8 8L1 4q-3 7 3 11l4 1 2-4z" fill="#2f9a52"/><circle cx="8" cy="8" r="4" fill="#fff"/><circle cx="8" cy="8" r="3" fill="#3f7fe8"/>'],
 ["Notepad",'<path d="M2 1h12v14H2z" fill="#5cc3d8"/><path d="M4 5h8M4 8h8M4 11h6" stroke="#146f86"/><path d="M3 1.500h10" stroke="#34727f" stroke-dasharray="1 1" stroke-width="2"/><path d="M2 14h12v2H2z" fill="#b7734a"/>'],
 ["PowerPoint",'<circle cx="8.500" cy="8" r="7.500" fill="#d8404b"/><path d="M9 0q7 1 7 8H9z" fill="#f28a67"/><path d="M2 11q3 5 9 4 5-2 5-7H9z" fill="#b92a55"/>'+letter('#a81f36','P'),2],
 ["Media",'<path d="M0 3h16v11H0z" fill="#f3f6fa" stroke="#8695a5" stroke-width=".8"/><path d="M5 4h8v9H5z" fill="#1c78be"/><path d="M2 4h2v9H2z" fill="#7fd0ee"/>'],
 ["Roblox",'<rect width="16" height="16" rx="3" fill="#3555e0"/><path d="M5 3l8 2-2 8-8-2z" fill="#fff"/><path d="M7.200 6.500l2.500.6-.7 2.500-2.500-.6z" fill="#3555e0"/>'],
 ["Acrobat",'<rect width="15" height="15" x=".5" y=".5" rx="2" fill="#b0090c"/><path d="M3.500 12q5-4 4-9M7.500 6q1 3.500 5.500 4-5-1-9.500 2" fill="none" stroke="#fff" stroke-width="1.300"/>',1],
 ["OBS",'<circle cx="7" cy="9" r="7" fill="#222"/><path d="M7 3q-3 2 0 5M3 12q4 1 4-4M12 11q-2-4-5-3" fill="none" stroke="#aaa" stroke-width="1.300"/><circle cx="13" cy="2" r="4" fill="#e2060e"/>',1],
 ["Settings",'<circle cx="8" cy="8" r="6.500" fill="none" stroke="#6c7883" stroke-width="3" stroke-dasharray="3.200 1.900"/><circle cx="8" cy="8" r="5.500" fill="#77838e"/><circle cx="8" cy="8" r="3.500" fill="#dceaf5"/><circle cx="8" cy="8" r="2.300" fill="#1764ab"/>',1]];
$('apps').innerHTML=apps.map(a=>`<button class="app${a[2]==1?' run':a[2]==2?' act':''}" aria-label="${a[0]}"><svg class="i16" viewBox="0 0 16 16" style="stroke:none">${a[1].replace(/stroke="(#\w+)"/g,'style="stroke:$1"')}</svg></button>`).join('');
</script>
<script src="https://cdn.jsdelivr.net/npm/bootstrap@5.3.0/dist/js/bootstrap.bundle.min.js"></script>
</body>
</html>
